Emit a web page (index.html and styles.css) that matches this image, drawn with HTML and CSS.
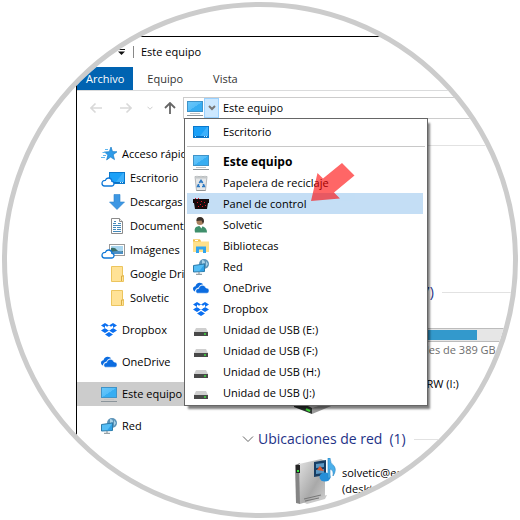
FILE: index.html
```
<!DOCTYPE html>
<html lang="es">
<head>
    <meta charset="UTF-8">
    <meta name="viewport" content="width=device-width, initial-scale=1.0">
    <title>Este equipo</title>
    <link rel="stylesheet" href="styles.css">
</head>
<body>
    <!-- Icon sprite -->
    <svg class="sprite" aria-hidden="true">
        <defs>
            <linearGradient id="screen" x1="0" y1="0" x2="1" y2="1">
                <stop offset="0" stop-color="#6cc8fa"/>
                <stop offset="0.5" stop-color="#55bdf8"/>
                <stop offset="0.52" stop-color="#36adf2"/>
                <stop offset="1" stop-color="#36adf2"/>
            </linearGradient>
            <linearGradient id="metal" x1="0" y1="0" x2="1" y2="1">
                <stop offset="0" stop-color="#e2e2e2"/>
                <stop offset="0.6" stop-color="#a9a9a9"/>
                <stop offset="1" stop-color="#d0d0d0"/>
            </linearGradient>
        </defs>
        <symbol id="pc" viewBox="0 0 16 16">
            <rect x="0.5" y="1.5" width="15" height="10" fill="url(#screen)" stroke="#3f93c8"/>
            <path d="M3 13.5h10" stroke="#c4c4c4"/>
            <path d="M0 15.5h16" stroke="#8c959b"/>
        </symbol>
        <symbol id="desktop" viewBox="0 0 16 16">
            <rect x="0.5" y="2.5" width="15" height="11" fill="#1ba1f8" stroke="#0a78cc"/>
            <path d="M7 12L14 3h1v9z" fill="#3db0fb"/>
            <path d="M1 12.5h14" stroke="#0b6fc0"/>
            <path d="M2 12.5h1M11 12.5h1M13 12.5h1" stroke="#d5efff"/>
        </symbol>
        <symbol id="cloud" viewBox="0 0 14 10">
            <path d="M3.5 9h7a2.300 2.300 0 0 0 .4-4.600C10.700 2.300 9.200 1 7.500 1 5.900 1 4.800 2 4.300 3.400 2.300 3.300 1 4.500 1 6.200 1 7.800 2 9 3.500 9z" fill="#fff" stroke="#0f78d8" stroke-width="1.300"/>
        </symbol>
        <symbol id="star" viewBox="0 0 16 16">
            <path d="M10 1l1.500 4.600 4.500.2-3.800 2.900 1.300 4.900-3.900-2.500-4 2.800 1.300-4.800L3.500 6l4.800-.3z" fill="#2f9be8" stroke="#1b7dc7" stroke-width="0.700"/>
            <path d="M4 3.500h3M1.500 6.500h3M0 11.500h4M2 9.500h3" stroke="#5db6f0"/>
        </symbol>
        <symbol id="download" viewBox="0 0 16 16">
            <path d="M5 0.500h6v7.500h4.500L8 15.500.5 8H5z" fill="#3d97e3" stroke="#2c83cf" stroke-width="0.600"/>
        </symbol>
        <symbol id="document" viewBox="0 0 16 16">
            <path d="M2.500.500h8l3 3v12h-11z" fill="#fff" stroke="#8b8b8b"/>
            <path d="M10.500.500v3h3" fill="#eee" stroke="#8b8b8b"/>
            <path d="M5 3.500h2M4 5.500h3M4 7.500h8M9 5.500h3M8 9.500h4M4 9.500h3M4 11.500h3M8 11.500h4M4 13.500h8" stroke="#4389bb"/>
        </symbol>
        <symbol id="picture" viewBox="0 0 16 16">
            <rect x="0.500" y="2.500" width="15" height="11" fill="#fff" stroke="#999"/>
            <path d="M2 4h12v8H2z" fill="#a9d6ef"/>
            <path d="M2 6q4-1 6 2t6 1v3H2z" fill="#3b6f68"/>
            <path d="M2 10q6-2 12 0v2H2z" fill="#4c8fc4"/>
        </symbol>
        <symbol id="folder" viewBox="0 0 16 16">
            <path d="M2.500.500h11v9h1v6h-12z" fill="#ffe296" stroke="#ecc55e"/>
            <path d="M12.500 15v-5h2" fill="none" stroke="#d8ad44"/>
        </symbol>
        <symbol id="dropbox" viewBox="0 0 16 16">
            <path d="M4 1l4 2.500L4 6 0 3.500zM12 1l4 2.500L12 6 8 3.500zM4 6l4 2.500L4 11 0 8.500zM12 6l4 2.500-4 2.500-4-2.500zM8 10l4 2.500L8 15l-4-2.500z" fill="#0a6ff0"/>
            <path d="M4 3.500L8 6l4-2.500V6L8 8.500 4 6z" fill="#fff"/>
        </symbol>
        <symbol id="onedrive" viewBox="0 0 16 16">
            <path d="M1.800 11.500C.5 11 0 9.900 0 8.800 0 7.200 1.200 6.300 2.500 6.200 3 4 4.700 2.700 6.800 2.800c1.500 0 2.700.700 3.300 1.700C7.500 4.300 6 5.800 5.700 7.500 3.500 7.800 2.300 9.500 1.800 11.500z" fill="#0b6ce0"/>
            <path d="M4.300 13.200C2 12.500 2.300 8.900 5.800 8.500 6.400 4.700 11.300 4 13 8c1.800-.100 3 1 3 2.700 0 1.300-.900 2.500-2.200 2.500z" fill="#0b6ce0" stroke="#fff" stroke-width="0.500"/>
        </symbol>
        <symbol id="network" viewBox="0 0 16 16">
            <circle cx="11" cy="5" r="5" fill="#5b93b8"/>
            <path d="M9 1q3 0 3 3l-3 1zM13 2l2 3-2 3z" fill="#a8d2e8"/>
            <path d="M.500 6.500l11-1.500v7.500l-11 .500z" fill="#54bdf5" stroke="#2b7aa9"/>
            <path d="M6 12.500L11 6v6z" fill="#2fa2e8"/>
            <path d="M3 15.300h6M6 13v2" stroke="#7d8b93"/>
        </symbol>
        <symbol id="trash" viewBox="0 0 16 16">
            <path d="M2 1.500h12l-1.500 14h-9z" fill="#e5e7e8" stroke="#b4b7b9"/>
            <path d="M2 2l2-1.500L6 2l2-1.500L10 2l2-1.500L14 2v1.500H2z" fill="#c4c8ca"/>
            <path d="M6.300 8l1.700-2.500L9.700 8M10.300 9l1 2.500H9M7 11.500H4.700l1-2.500" fill="none" stroke="#2b78c2" stroke-width="1.700"/>
            <path d="M3.500 15.500h9" stroke="#8f9395"/>
        </symbol>
        <symbol id="panel" viewBox="0 0 16 16">
            <path d="M0 3h16v4h-1l-1 6H2L1 7H0z" fill="#160a0c"/>
            <path d="M2 2.500h1M5 2.500h1M4 6.500h1M7 8.500h1M11 6.500h1M9 10.500h1M5 10.500h1M12 9.500h1M8 5.500h1" stroke="#e3142b"/>
        </symbol>
        <symbol id="user" viewBox="0 0 16 16">
            <path d="M2 15.500q-1-4 1-5.500l3-1 4 .500q4 1.500 4 6z" fill="#3f8f6c"/>
            <path d="M6 8.500h3.500l-1 3z" fill="#fff"/>
            <circle cx="7" cy="4.500" r="3.500" fill="#a9805f"/>
            <path d="M3.500 4Q3 0 7 0t4 4.500L10 7 8.500 3.500z" fill="#3a3029"/>
        </symbol>
        <symbol id="library" viewBox="0 0 16 16">
            <path d="M0 1.500h7l1 2h8v10.500H0z" fill="#ffe08a"/>
            <path d="M0 1.500h7l1 2H0z" fill="#f0bd47"/>
            <path d="M2 2.500h3" stroke="#fff"/>
            <path d="M3 15V8.500h10V15h-3v-3.500H6V15z" fill="#31a4ee"/>
        </symbol>
        <symbol id="usb" viewBox="0 0 16 16">
            <path d="M3 6h10l2 4H1z" fill="#cfcfcf"/>
            <path d="M1 10h14v4H1z" fill="#494949"/>
            <path d="M11 12h2" stroke="#3fe03f" stroke-width="1.500"/>
        </symbol>
        <symbol id="chevron" viewBox="0 0 12 8">
            <path d="M1 1.500l5 5 5-5" fill="none" stroke="currentColor"/>
        </symbol>
    </svg>

    <main class="lens">
        <div class="window">
            <header class="title-bar">
                <svg class="quick-caret" viewBox="0 0 7 6"><path d="M0 .500h7" stroke="#111"/><path d="M0 2.500h7L3.500 6z" fill="#111"/></svg>
                <h1 class="title">Este equipo</h1>
            </header>

            <nav class="ribbon">
                <button type="button" class="tab tab-active">Archivo</button>
                <button type="button" class="tab">Equipo</button>
                <button type="button" class="tab">Vista</button>
            </nav>

            <div class="nav-bar">
                <button type="button" class="nav-button" aria-label="Atrás">
                    <svg class="arrow" viewBox="0 0 12 12"><path d="M12 6H1M5.500 1.500L1 6l4.500 4.500" fill="none" stroke="#d9d9d9" stroke-width="1.600"/></svg>
                </button>
                <button type="button" class="nav-button forward" aria-label="Adelante">
                    <svg class="arrow" viewBox="0 0 12 12"><path d="M0 6h11M6.500 1.500L11 6l-4.500 4.500" fill="none" stroke="#d9d9d9" stroke-width="1.600"/></svg>
                </button>
                <button type="button" class="nav-button recent" aria-label="Ubicaciones recientes">
                    <svg class="small-chevron"><use href="#chevron"/></svg>
                </button>
                <button type="button" class="nav-button up" aria-label="Subir">
                    <svg class="arrow" viewBox="0 0 12 12"><path d="M6 12V1M1 6l5-5 5 5" fill="none" stroke="#666" stroke-width="1.800"/></svg>
                </button>

                <div class="address">
                    <svg class="icon"><use href="#pc"/></svg>
                    <button type="button" class="address-toggle" aria-label="Mostrar ubicaciones">
                        <svg viewBox="0 0 8 6"><path d="M1 1l3 3 3-3" fill="none" stroke="#777" stroke-width="2"/></svg>
                    </button>
                    <input type="text" class="address-input" value="Este equipo" aria-label="Dirección">

                    <div class="menu">
                        <button type="button" class="menu-item"><svg class="icon"><use href="#desktop"/></svg>Escritorio</button>
                        <hr class="menu-line">
                        <button type="button" class="menu-item current"><svg class="icon"><use href="#pc"/></svg>Este equipo</button>
                        <button type="button" class="menu-item"><svg class="icon"><use href="#trash"/></svg>Papelera de reciclaje</button>
                        <button type="button" class="menu-item selected"><svg class="icon"><use href="#panel"/></svg>Panel de control</button>
                        <button type="button" class="menu-item"><svg class="icon"><use href="#user"/></svg>Solvetic</button>
                        <button type="button" class="menu-item"><svg class="icon"><use href="#library"/></svg>Bibliotecas</button>
                        <button type="button" class="menu-item"><svg class="icon"><use href="#network"/></svg>Red</button>
                        <button type="button" class="menu-item"><svg class="icon"><use href="#onedrive"/></svg>OneDrive</button>
                        <button type="button" class="menu-item"><svg class="icon"><use href="#dropbox"/></svg>Dropbox</button>
                        <button type="button" class="menu-item"><svg class="icon"><use href="#usb"/></svg>Unidad de USB (E:)</button>
                        <button type="button" class="menu-item"><svg class="icon"><use href="#usb"/></svg>Unidad de USB (F:)</button>
                        <button type="button" class="menu-item"><svg class="icon"><use href="#usb"/></svg>Unidad de USB (H:)</button>
                        <button type="button" class="menu-item"><svg class="icon"><use href="#usb"/></svg>Unidad de USB (J:)</button>

                        <svg class="pointer" viewBox="0 0 44 40"><path d="M0 38L6.500 10l5.500 5.500L31 0l12.500 12.500L23 29.500l6 6z" fill="#f00"/></svg>
                    </div>
                </div>
            </div>

            <div class="explorer">
                <aside class="sidebar">
                    <div class="tree-group">
                        <a href="#" class="tree-item"><svg class="icon"><use href="#star"/></svg>Acceso rápido</a>
                        <a href="#" class="tree-item child"><span class="synced"><svg class="icon"><use href="#desktop"/></svg><svg class="cloud"><use href="#cloud"/></svg></span>Escritorio</a>
                        <a href="#" class="tree-item child"><svg class="icon"><use href="#download"/></svg>Descargas</a>
                        <a href="#" class="tree-item child"><svg class="icon"><use href="#document"/></svg>Documentos</a>
                        <a href="#" class="tree-item child"><span class="synced"><svg class="icon"><use href="#picture"/></svg><svg class="cloud"><use href="#cloud"/></svg></span>Imágenes</a>
                        <a href="#" class="tree-item child"><svg class="icon"><use href="#folder"/></svg>Google Drive</a>
                        <a href="#" class="tree-item child"><svg class="icon"><use href="#folder"/></svg>Solvetic</a>
                    </div>
                    <a href="#" class="tree-item"><svg class="icon"><use href="#dropbox"/></svg>Dropbox</a>
                    <a href="#" class="tree-item"><svg class="icon"><use href="#onedrive"/></svg>OneDrive</a>
                    <a href="#" class="tree-item tree-selected"><svg class="icon"><use href="#pc"/></svg>Este equipo</a>
                    <a href="#" class="tree-item"><svg class="icon"><use href="#network"/></svg>Red</a>
                </aside>

                <div class="content">
                    <section class="section folders">
                        <h2 class="section-title"><svg class="chevron"><use href="#chevron"/></svg>Carpetas <span class="count">(6)</span></h2>
                    </section>

                    <section class="section">
                        <h2 class="section-title"><svg class="chevron"><use href="#chevron"/></svg>Dispositivos y unidades <span class="count">(7)</span></h2>
                        <div class="tiles">
                            <div class="tile">
                                <svg class="tile-icon" viewBox="0 0 42 46"><use href="#usb"/></svg>
                                <div class="tile-text">
                                    <div>Disco local (C:)</div>
                                    <div class="usage"><div class="usage-fill" style="width: 74%"></div></div>
                                    <div class="free-space">105 GB disponibles de 389 GB</div>
                                </div>
                            </div>
                            <div class="tile">
                                <svg class="tile-icon" viewBox="0 0 42 46">
                                    <path d="M0 30L20 22l22 9-24 8z" fill="#d4d4d4"/>
                                    <path d="M18 39l24-8v4l-24 10z" fill="#9b9b9b"/>
                                    <path d="M0 30l18 9v6L0 38z" fill="#2e3331"/>
                                    <path d="M12 40l4 2" stroke="#43e03c" stroke-width="2"/>
                                </svg>
                                <div class="tile-text">
                                    <div>Unidad de DVD+RW (I:)</div>
                                    <div class="free-space">CDFS</div>
                                </div>
                            </div>
                        </div>
                    </section>

                    <section class="section">
                        <h2 class="section-title"><svg class="chevron"><use href="#chevron"/></svg>Ubicaciones de red <span class="count">(1)</span></h2>
                        <div class="tiles">
                            <div class="tile">
                                <svg class="tile-icon" viewBox="0 0 42 46">
                                    <path d="M7 43l26-6-2 4-18 5z" fill="#c9c9c9"/>
                                    <path d="M1 7l5-2v41l-4-1z" fill="#858585"/>
                                    <path d="M5 6l22-5 4 2v35L6 46z" fill="url(#metal)"/>
                                    <path d="M2 7h4v8H2z" fill="#252525"/>
                                    <path d="M3 12h2v2H3z" fill="#31e53b"/>
                                    <path d="M10 41l17-4M11 43l14-3" stroke="#777"/>
                                    <path d="M20 4l12-2v15l-12 2z" fill="#173d63"/>
                                    <path d="M22 6l8-1v4l-8 1zM22 12l8-1v4l-8 1z" fill="#5b97c3"/>
                                    <path d="M23 12l3-4 4 5z" fill="#e2572c"/>
                                    <ellipse cx="31" cy="19" rx="5.500" ry="4.500" fill="#258fd9"/>
                                    <path d="M34 0h2q0 5 4 8 3 4-1 10 1-6-3-7v9h-2z" fill="#4aafea" stroke="#2283c5" stroke-width="0.600"/>
                                </svg>
                                <div class="tile-text">
                                    <div>solvetic@equipo</div>
                                    <div>(desktop)</div>
                                </div>
                            </div>
                        </div>
                    </section>
                </div>
            </div>
        </div>
    </main>
</body>
</html>
```
FILE: styles.css
```
* {
    box-sizing: border-box;
}

body {
    margin: 0;
    padding: 2px;
    background: #fff;
    color: #000;
    font-family: "Open Sans", "Noto Sans", sans-serif;
    font-size: 11px;
    line-height: 16px;
}

button,
input {
    font: inherit;
    color: inherit;
    border: none;
    background: none;
    padding: 0;
    margin: 0;
}

a {
    color: inherit;
    text-decoration: none;
}

svg {
    display: block;
    flex-shrink: 0;
}

.sprite {
    position: absolute;
    width: 0;
    height: 0;
}

.icon {
    width: 16px;
    height: 16px;
}

/* Round frame that crops the window */
.lens {
    aspect-ratio: 1;
    border: 5px solid #ccc;
    border-radius: 50%;
    overflow: hidden;
    padding: 29px 0 0 69px;
}

.window {
    height: 100%;
    border-top: 1px solid #000;
    border-left: 1px solid #000;
    display: flex;
    flex-direction: column;
}

.title-bar {
    display: flex;
    align-items: center;
    height: 30px;
    padding-left: 41px;
    gap: 8px;
}

.quick-caret {
    width: 7px;
    height: 6px;
}

.title {
    margin: 0;
    padding-left: 7px;
    border-left: 1px solid #888;
    font-size: 11px;
    font-weight: normal;
    line-height: 12px;
}

.ribbon {
    display: flex;
    height: 24px;
    border-bottom: 1px solid #dadbdc;
}

.tab {
    padding: 0 16px 0 14px;
    color: #333;
}

.tab-active {
    padding: 0 9px;
    background: #0063b1;
    color: #fff;
}

/* Address row */
.nav-bar {
    display: flex;
    align-items: center;
    padding: 6px 0 7px 13px;
}

.nav-button {
    width: 12px;
    margin-right: 18px;
}

.nav-button.forward {
    margin-right: 15px;
}

.nav-button.recent {
    width: 6px;
    margin-right: 11px;
    color: #999;
}

.nav-button.up {
    margin-right: 7px;
}

.arrow {
    width: 12px;
    height: 12px;
}

.small-chevron {
    width: 6px;
    height: 4px;
}

.address {
    position: relative;
    flex: 1;
    display: flex;
    align-items: center;
    height: 22px;
    padding-left: 3px;
    border: 1px solid #ccc;
    border-right: none;
}

.address-toggle {
    display: flex;
    align-items: center;
    justify-content: center;
    width: 15px;
    height: 20px;
    margin-left: 1px;
    background: #cce8ff;
    border: 1px solid #99d1ff;
}

.address-toggle svg {
    width: 8px;
    height: 6px;
}

.address-input {
    flex: 1;
    min-width: 0;
    padding-left: 4px;
    outline: none;
}

/* Locations list */
.menu {
    position: absolute;
    z-index: 2;
    top: 20px;
    left: 0;
    width: 244px;
    padding: 2px;
    background: #fff;
    border: 1px solid #666;
    box-shadow: 3px 4px 2px -1px rgba(0, 0, 0, 0.5);
}

.menu-item {
    display: flex;
    align-items: center;
    width: 236px;
    height: 21px;
    padding-left: 6px;
    gap: 14px;
    text-align: left;
}

.menu-item.current {
    font-size: 12px;
    font-weight: bold;
}

.menu-item.selected {
    background: #c4def5;
}

.menu-line {
    height: 1px;
    margin: 4px 0;
    border: none;
    background: #c8c8c8;
}

.pointer {
    position: absolute;
    top: 44px;
    left: 126px;
    width: 44px;
    height: 40px;
    opacity: 0.6;
}

/* Main area */
.explorer {
    flex: 1;
    display: flex;
    min-height: 0;
}

.sidebar {
    width: 159px;
    flex-shrink: 0;
    padding-top: 16px;
    display: flex;
    flex-direction: column;
    gap: 8px;
}

.tree-item {
    display: flex;
    align-items: center;
    height: 24px;
    padding-left: 24px;
    gap: 5px;
    white-space: nowrap;
}

.tree-item.child {
    padding-left: 32px;
}

.tree-selected {
    background: #ccc;
}

.synced {
    position: relative;
}

.cloud {
    position: absolute;
    left: -8px;
    bottom: -1px;
    width: 14px;
    height: 10px;
}

.content {
    flex: 1;
    min-width: 0;
    padding-top: 7px;
    overflow: hidden;
}

.folders {
    min-height: 147px;
}

.section-title {
    display: flex;
    align-items: center;
    gap: 4px;
    height: 24px;
    margin: 0;
    padding-left: 6px;
    color: #1e3287;
    font-size: 14px;
    font-weight: normal;
    white-space: nowrap;
}

.section-title::after {
    content: "";
    flex: 1;
    height: 1px;
    margin-left: 4px;
    background: #e2e2e2;
}

.count {
    margin-left: 3px;
}

.chevron {
    width: 12px;
    height: 8px;
    color: #666;
}

.tiles {
    display: flex;
    flex-direction: column;
    gap: 10px;
    padding: 6px 0 11px 58px;
}

.tile {
    display: flex;
    align-items: center;
    gap: 6px;
    height: 48px;
    white-space: nowrap;
}

.tile-icon {
    width: 42px;
    height: 46px;
}

.usage {
    width: 184px;
    height: 14px;
    margin-top: 2px;
    padding: 1px;
    background: #e6e6e6;
    border: 1px solid #bcbcbc;
}

.usage-fill {
    height: 100%;
    background: #3399cc;
}

.free-space {
    color: #6d6d6d;
}
```
